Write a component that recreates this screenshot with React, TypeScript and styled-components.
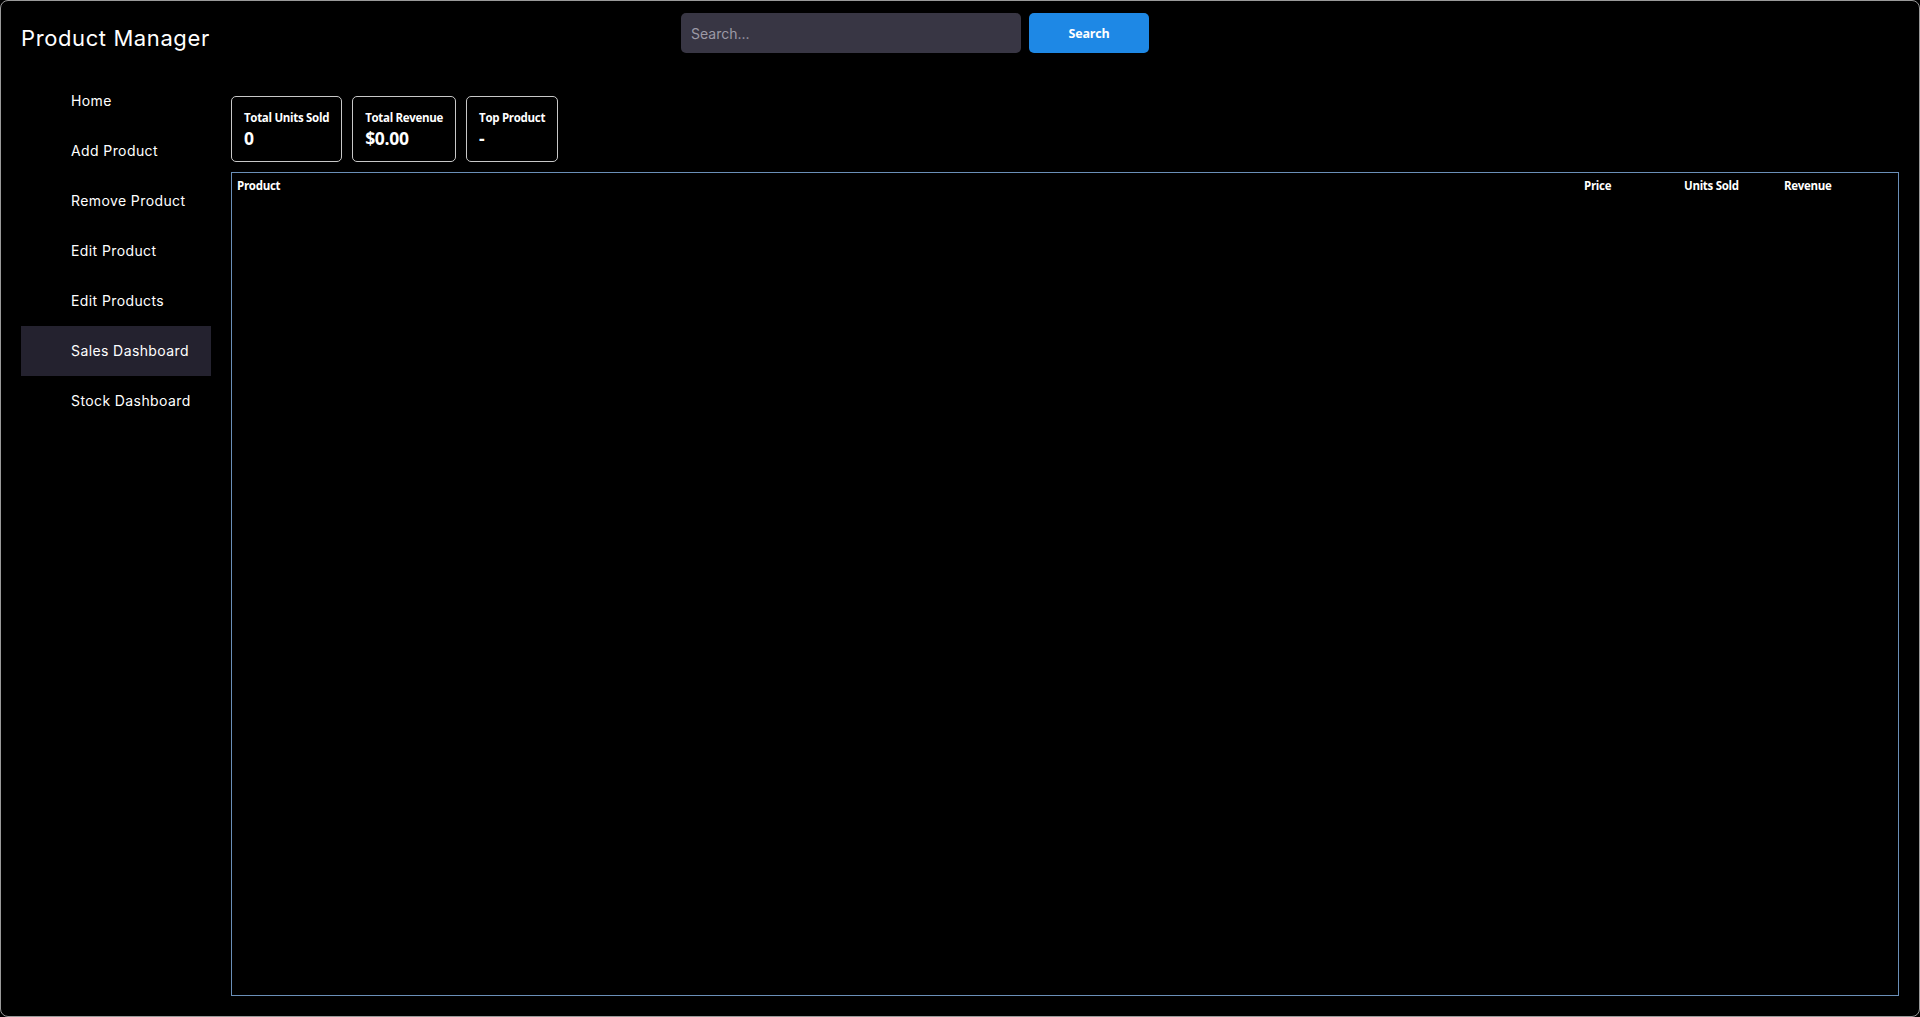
import React from "react";
import styled, { createGlobalStyle } from "styled-components";

const GlobalStyle = createGlobalStyle`
  html, body {
    margin: 0;
    padding: 0;
    background: #000;
  }
  * { box-sizing: border-box; }
`;

const Frame = styled.div`
  height: 100vh;
  border: 1px solid #9a9a9a;
  border-radius: 8px;
  background: #000;
  color: #fff;
  display: flex;
  flex-direction: column;
  overflow: hidden;
`;

const Header = styled.header`
  height: 75px;
  flex: none;
  display: flex;
  align-items: flex-start;
  padding: 12px 20px 0 20px;
`;

const Title = styled.h1`
  margin: 14px 0 0 0;
  font-family: Inter, "Open Sans", sans-serif;
  font-size: 22px;
  line-height: 22px;
  font-weight: 400;
  letter-spacing: 0.6px;
  color: #fff;
  width: 190px;
  white-space: nowrap;
`;

const SearchForm = styled.form`
  display: flex;
  gap: 8px;
  margin-left: 470px;
`;

const SearchInput = styled.input`
  width: 340px;
  height: 40px;
  border: none;
  border-radius: 5px;
  background: #383644;
  color: #fff;
  padding: 0 10px;
  font-family: Inter, "Open Sans", sans-serif;
  font-size: 14px;
  outline: none;
  &::placeholder {
    color: #9c9aa6;
  }
`;

const SearchButton = styled.button`
  width: 120px;
  height: 40px;
  border: none;
  border-radius: 5px;
  background: #1e88e5;
  color: #fff;
  font-family: "Open Sans", "Noto Sans", sans-serif;
  font-weight: 700;
  font-size: 12.5px;
  letter-spacing: -0.2px;
  cursor: pointer;
`;

const Body = styled.div`
  flex: 1;
  min-height: 0;
  display: flex;
  gap: 20px;
  padding: 0 20px 20px 20px;
`;

const Sidebar = styled.nav`
  width: 190px;
  flex: none;
  display: flex;
  flex-direction: column;
`;

const NavItem = styled.a<{ $active?: boolean }>`
  height: 50px;
  display: flex;
  align-items: center;
  padding-left: 50px;
  padding-bottom: 1px;
  background: ${(p) => (p.$active ? "#24222f" : "transparent")};
  color: #fff;
  text-decoration: none;
  font-family: Inter, "Open Sans", sans-serif;
  font-size: 14px;
  letter-spacing: 0.4px;
  white-space: nowrap;
  cursor: pointer;
`;

const Main = styled.main`
  flex: 1;
  min-width: 0;
  display: flex;
  flex-direction: column;
  gap: 10px;
  padding-top: 20px;
`;

const Cards = styled.div`
  display: flex;
  gap: 10px;
`;

const Card = styled.div`
  border: 1px solid #c8c8c8;
  border-radius: 5px;
  padding: 13px 12px 11px 12px;
  display: flex;
  flex-direction: column;
  font-family: "Open Sans", "Noto Sans", sans-serif;
  font-weight: 700;
`;

const CardLabel = styled.div`
  font-size: 11.5px;
  line-height: 16px;
  letter-spacing: -0.3px;
  white-space: nowrap;
`;

const CardValue = styled.div`
  font-size: 17.5px;
  line-height: 24px;
  letter-spacing: -0.3px;
`;

const TableBox = styled.div`
  flex: 1;
  min-height: 0;
  border: 1px solid #6a8fb8;
`;

const Table = styled.table`
  width: 100%;
  border-collapse: collapse;
  font-family: "Open Sans", "Noto Sans", sans-serif;
`;

const Th = styled.th<{ $w?: number }>`
  text-align: left;
  padding: 5px;
  font-size: 11.5px;
  line-height: 16px;
  letter-spacing: -0.3px;
  font-weight: 700;
  color: #fff;
  width: ${(p) => (p.$w ? `${p.$w}px` : "auto")};
`;

const navItems = [
  "Home",
  "Add Product",
  "Remove Product",
  "Edit Product",
  "Edit Products",
  "Sales Dashboard",
  "Stock Dashboard",
];

export default function App() {
  return (
    <>
      <GlobalStyle />
      <Frame>
        <Header>
          <Title>Product Manager</Title>
          <SearchForm onSubmit={(e) => e.preventDefault()}>
            <SearchInput placeholder="Search..." />
            <SearchButton type="submit">Search</SearchButton>
          </SearchForm>
        </Header>
        <Body>
          <Sidebar>
            {navItems.map((n) => (
              <NavItem key={n} $active={n === "Sales Dashboard"}>
                {n}
              </NavItem>
            ))}
          </Sidebar>
          <Main>
            <Cards>
              <Card>
                <CardLabel>Total Units Sold</CardLabel>
                <CardValue>0</CardValue>
              </Card>
              <Card>
                <CardLabel>Total Revenue</CardLabel>
                <CardValue>$0.00</CardValue>
              </Card>
              <Card>
                <CardLabel>Top Product</CardLabel>
                <CardValue>-</CardValue>
              </Card>
            </Cards>
            <TableBox>
              <Table>
                <thead>
                  <tr>
                    <Th>Product</Th>
                    <Th $w={100}>Price</Th>
                    <Th $w={100}>Units Sold</Th>
                    <Th $w={119}>Revenue</Th>
                  </tr>
                </thead>
                <tbody />
              </Table>
            </TableBox>
          </Main>
        </Body>
      </Frame>
    </>
  );
}
